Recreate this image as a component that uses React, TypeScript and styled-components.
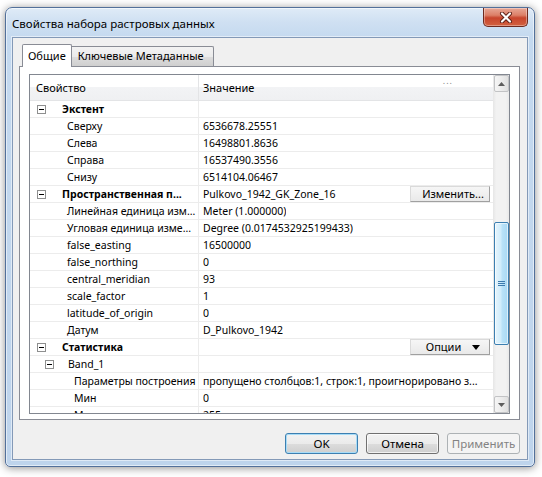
import React from "react";
import styled, { createGlobalStyle } from "styled-components";

const GlobalStyle = createGlobalStyle`
  html, body {
    margin: 0;
    padding: 0;
    background: #ffffff;
  }
  body {
    font-family: "Noto Sans", "Liberation Sans", sans-serif;
    color: #000;
    overflow: hidden;
  }
  * {
    box-sizing: border-box;
  }
`;

const Page = styled.div`
  width: 542px;
  height: 477px;
  padding: 7px 0 0 5px;
`;

const Window = styled.div`
  width: 530px;
  height: 460px;
  border: 1px solid #52709a;
  border-radius: 7px 7px 5px 5px;
  background: linear-gradient(
    180deg,
    #dfebf7 0px,
    #cfe0f2 14px,
    #c4d9ef 30px,
    #bed4ec 100%
  );
  box-shadow: 0 1px 9px rgba(0, 0, 0, 0.45),
    inset 0 0 0 1px rgba(255, 255, 255, 0.55);
  display: flex;
  flex-direction: column;
`;

const TitleBar = styled.div`
  height: 29px;
  display: flex;
  align-items: flex-start;
  padding: 0 6px;
  flex-shrink: 0;
`;

const Title = styled.div`
  margin-top: 8px;
  font-size: 11.5px;
  line-height: 16px;
`;

const CloseButton = styled.div`
  margin-left: auto;
  width: 45px;
  height: 19px;
  border: 1px solid #6d2a1f;
  border-top: none;
  border-radius: 0 0 5px 5px;
  background: linear-gradient(
    180deg,
    #e8a796 0%,
    #dc8068 40%,
    #c8452d 55%,
    #d2613f 100%
  );
  box-shadow: inset 0 0 0 1px rgba(255, 255, 255, 0.35);
  display: flex;
  align-items: center;
  justify-content: center;
`;

const Client = styled.div`
  flex: 1;
  margin: 0 6px 6px;
  border: 1px solid #8399b7;
  background: #f0f0f0;
  padding: 6px 7px 5px 6px;
  display: flex;
  flex-direction: column;
  box-shadow: 0 0 0 1px rgba(255, 255, 255, 0.5);
`;

const TabStrip = styled.div`
  height: 22px;
  display: flex;
  align-items: flex-end;
  padding-left: 3px;
  position: relative;
  z-index: 1;
  flex-shrink: 0;
`;

const Tab = styled.div<{ $active?: boolean }>`
  font-size: 11px;
  line-height: 16px;
  border: 1px solid #898c95;
  border-bottom: none;
  border-radius: 2px 2px 0 0;
  white-space: nowrap;
  ${(p) =>
    p.$active
      ? `
    height: 23px;
    margin-bottom: -1px;
    padding: 3px 5px 0 5px;
    background: #ffffff;
    position: relative;
    z-index: 2;
  `
      : `
    height: 20px;
    margin-left: -2px;
    padding: 1px 9px 0 7px;
    background: linear-gradient(180deg, #f3f3f3 0%, #ebebeb 50%, #dddddd 51%, #cfcfcf 100%);
  `}
`;

const TabPanel = styled.div`
  height: 354px;
  flex-shrink: 0;
  border: 1px solid #898c95;
  background: #ffffff;
  padding: 7px 9px 5px 9px;
`;

const PropertyGrid = styled.div`
  height: 340px;
  border: 1px solid #828790;
  display: flex;
`;

const GridBody = styled.div`
  flex: 1;
  min-width: 0;
  display: flex;
  flex-direction: column;
  overflow: hidden;
`;

const HeaderRow = styled.div`
  height: 26px;
  flex-shrink: 0;
  display: flex;
  border-bottom: 1px solid #e3e4e6;
  background: linear-gradient(
    180deg,
    #ffffff 0%,
    #ffffff 46%,
    #f2f3f5 50%,
    #eff0f2 100%
  );
  font-size: 11px;
`;

const HeaderCell = styled.div<{ $width?: number }>`
  ${(p) => (p.$width ? `width: ${p.$width}px;` : "flex: 1;")}
  display: flex;
  align-items: center;
  padding-left: ${(p) => (p.$width ? 6 : 4)}px;
  padding-top: 0;
  border-right: ${(p) => (p.$width ? "1px solid #e3e4e6" : "none")};
  position: relative;
`;

const HeaderDots = styled.span`
  position: absolute;
  right: 40px;
  top: 1px;
  font-size: 9px;
  line-height: 10px;
  color: #8a8a8a;
  letter-spacing: 1px;
`;

const Row = styled.div`
  height: 17px;
  flex-shrink: 0;
  display: flex;
  border-bottom: 1px solid #ececec;
  font-size: 10.5px;
  line-height: 16px;
`;

const NameCell = styled.div<{ $indent: number; $bold?: boolean }>`
  width: 169px;
  flex-shrink: 0;
  display: flex;
  align-items: center;
  padding-left: ${(p) => p.$indent}px;
  border-right: 1px solid #ececec;
  font-weight: ${(p) => (p.$bold ? 700 : 400)};
  white-space: nowrap;
  overflow: hidden;
`;

const Expander = styled.span<{ $gap: number }>`
  width: 9px;
  height: 9px;
  flex-shrink: 0;
  border: 1px solid #8e8f8f;
  background: #ffffff;
  margin-right: ${(p) => p.$gap}px;
  position: relative;
  &::after {
    content: "";
    position: absolute;
    left: 1px;
    top: 3px;
    width: 5px;
    height: 1px;
    background: #000;
  }
`;

const ValueCell = styled.div`
  flex: 1;
  min-width: 0;
  display: flex;
  align-items: center;
  padding-left: 4px;
  white-space: nowrap;
  overflow: hidden;
`;

const ValueText = styled.span`
  overflow: hidden;
  white-space: nowrap;
`;

const CellButton = styled.div`
  margin-left: auto;
  margin-right: 3px;
  width: 80px;
  height: 16px;
  flex-shrink: 0;
  display: flex;
  align-items: center;
  justify-content: center;
  gap: 11px;
  padding-left: 6px;
  font-size: 11px;
  background: linear-gradient(180deg, #f6f6f6 0%, #e9e9e9 100%);
  border: 1px solid #dadada;
  border-right-color: #a0a0a0;
  border-bottom-color: #a0a0a0;
`;

const Scrollbar = styled.div`
  width: 16px;
  flex-shrink: 0;
  display: flex;
  flex-direction: column;
  background: linear-gradient(90deg, #e6e6e6 0%, #f2f2f2 20%, #f2f2f2 80%, #e9e9e9 100%);
`;

const ArrowButton = styled.div`
  height: 17px;
  flex-shrink: 0;
  margin: 0 0 0 1px;
  border: 1px solid #c2c3c5;
  border-radius: 2px;
  background: linear-gradient(90deg, #f5f5f5 0%, #ececec 50%, #e0e0e0 100%);
  display: flex;
  align-items: center;
  justify-content: center;
`;

const Track = styled.div`
  flex: 1;
`;

const Thumb = styled.div<{ $top: number; $height: number }>`
  margin: ${(p) => p.$top}px 0 0 1px;
  height: ${(p) => p.$height}px;
  border: 1px solid #3c7fb1;
  border-radius: 2px;
  background: linear-gradient(
    90deg,
    #e6f5fd 0%,
    #d0ecfb 45%,
    #b9e2f8 55%,
    #a9d8f3 100%
  );
  box-shadow: inset 0 0 0 1px rgba(255, 255, 255, 0.6);
  display: flex;
  align-items: center;
  justify-content: center;
`;

const Footer = styled.div`
  margin-top: 13px;
  display: flex;
  justify-content: flex-end;
  gap: 8px;
`;

const DialogButton = styled.div<{ $default?: boolean; $disabled?: boolean }>`
  width: 73px;
  height: 21px;
  display: flex;
  align-items: center;
  justify-content: center;
  font-size: 11.5px;
  border-radius: 3px;
  border: 1px solid
    ${(p) => (p.$default ? "#3c7fb1" : p.$disabled ? "#adb2b5" : "#707070")};
  color: ${(p) => (p.$disabled ? "#838383" : "#000")};
  background: ${(p) =>
    p.$disabled
      ? "#f4f4f4"
      : "linear-gradient(180deg, #f2f2f2 0%, #ebebeb 50%, #dddddd 51%, #cfcfcf 100%)"};
  box-shadow: ${(p) =>
    p.$default
      ? "inset 0 0 0 1px #a8dcf7"
      : p.$disabled
      ? "none"
      : "inset 0 0 0 1px rgba(255,255,255,0.7)"};
`;

type Kind = "cat" | "item" | "group" | "sub";

interface PropRow {
  kind: Kind;
  name: string;
  value?: string;
  action?: string;
  dropdown?: boolean;
}

// last row is cut by the grid bottom, as in the dialog
const rows: PropRow[] = [
  { kind: "cat", name: "Экстент" },
  { kind: "item", name: "Сверху", value: "6536678.25551" },
  { kind: "item", name: "Слева", value: "16498801.8636" },
  { kind: "item", name: "Справа", value: "16537490.3556" },
  { kind: "item", name: "Снизу", value: "6514104.06467" },
  {
    kind: "cat",
    name: "Пространственная п...",
    value: "Pulkovo_1942_GK_Zone_16",
    action: "Изменить...",
  },
  { kind: "item", name: "Линейная единица изм...", value: "Meter (1.000000)" },
  {
    kind: "item",
    name: "Угловая единица изме...",
    value: "Degree (0.0174532925199433)",
  },
  { kind: "item", name: "false_easting", value: "16500000" },
  { kind: "item", name: "false_northing", value: "0" },
  { kind: "item", name: "central_meridian", value: "93" },
  { kind: "item", name: "scale_factor", value: "1" },
  { kind: "item", name: "latitude_of_origin", value: "0" },
  { kind: "item", name: "Датум", value: "D_Pulkovo_1942" },
  { kind: "cat", name: "Статистика", action: "Опции", dropdown: true },
  { kind: "group", name: "Band_1" },
  {
    kind: "sub",
    name: "Параметры построения",
    value: "пропущено столбцов:1, строк:1, проигнорировано з...",
  },
  { kind: "sub", name: "Мин", value: "0" },
  { kind: "sub", name: "Макс", value: "255" },
];

const indentFor: Record<Kind, number> = {
  cat: 7,
  item: 37,
  group: 15,
  sub: 44,
};

const CloseGlyph = () => (
  <svg width="14" height="11" viewBox="0 0 14 11">
    <path
      d="M3 1.5 L11 9.5 M11 1.5 L3 9.5"
      stroke="#5a1e14"
      strokeWidth="4"
      strokeLinecap="round"
    />
    <path
      d="M3 1.5 L11 9.5 M11 1.5 L3 9.5"
      stroke="#ffffff"
      strokeWidth="2.2"
      strokeLinecap="round"
    />
  </svg>
);

const ArrowGlyph = ({ down }: { down?: boolean }) => (
  <svg width="7" height="4" viewBox="0 0 7 4">
    <path
      d={down ? "M0 0 L7 0 L3.5 4 Z" : "M0 4 L7 4 L3.5 0 Z"}
      fill="#5d5d5d"
    />
  </svg>
);

const DropGlyph = () => (
  <svg width="8" height="5" viewBox="0 0 8 5">
    <path d="M0 0 L8 0 L4 5 Z" fill="#000" />
  </svg>
);

const GripGlyph = () => (
  <svg width="7" height="7" viewBox="0 0 7 7">
    <path d="M0 1.5 H7 M0 3.5 H7 M0 5.5 H7" stroke="#3d7bae" strokeWidth="1" />
  </svg>
);

const PropertyRow = ({ row }: { row: PropRow }) => {
  const expandable = row.kind === "cat" || row.kind === "group";
  return (
    <Row>
      <NameCell $indent={indentFor[row.kind]} $bold={row.kind === "cat"}>
        {expandable && <Expander $gap={row.kind === "cat" ? 16 : 14} />}
        {row.name}
      </NameCell>
      <ValueCell>
        {row.value && <ValueText>{row.value}</ValueText>}
        {row.action && (
          <CellButton>
            {row.action}
            {row.dropdown && <DropGlyph />}
          </CellButton>
        )}
      </ValueCell>
    </Row>
  );
};

export default function App() {
  return (
    <>
      <GlobalStyle />
      <Page>
        <Window>
          <TitleBar>
            <Title>Свойства набора растровых данных</Title>
            <CloseButton>
              <CloseGlyph />
            </CloseButton>
          </TitleBar>
          <Client>
            <TabStrip>
              <Tab $active>Общие</Tab>
              <Tab>Ключевые Метаданные</Tab>
            </TabStrip>
            <TabPanel>
              <PropertyGrid>
                <GridBody>
                  <HeaderRow>
                    <HeaderCell $width={169}>Свойство</HeaderCell>
                    <HeaderCell>
                      Значение
                      <HeaderDots>...</HeaderDots>
                    </HeaderCell>
                  </HeaderRow>
                  {rows.map((r, i) => (
                    <PropertyRow key={i} row={r} />
                  ))}
                </GridBody>
                <Scrollbar>
                  <ArrowButton>
                    <ArrowGlyph />
                  </ArrowButton>
                  <Track>
                    <Thumb $top={130} $height={123}>
                      <GripGlyph />
                    </Thumb>
                  </Track>
                  <ArrowButton>
                    <ArrowGlyph down />
                  </ArrowButton>
                </Scrollbar>
              </PropertyGrid>
            </TabPanel>
            <Footer>
              <DialogButton $default>OK</DialogButton>
              <DialogButton>Отмена</DialogButton>
              <DialogButton $disabled>Применить</DialogButton>
            </Footer>
          </Client>
        </Window>
      </Page>
    </>
  );
}
